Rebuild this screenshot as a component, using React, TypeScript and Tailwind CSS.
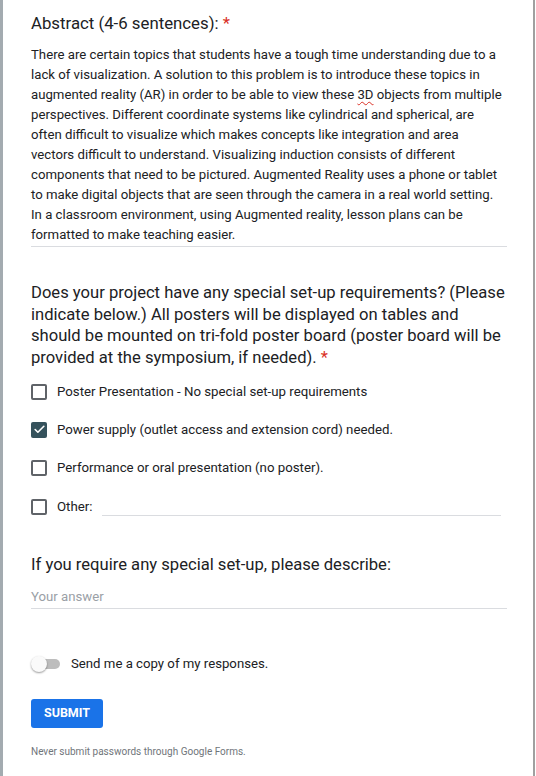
import React from 'react';
import { Check } from 'lucide-react';

const abstractLines = [
  'There are certain topics that students have a tough time understanding due to a',
  'lack of visualization. A solution to this problem is to introduce these topics in',
  '__3D__',
  'perspectives. Different coordinate systems like cylindrical and spherical, are',
  'often difficult to visualize which makes concepts like integration and area',
  'vectors difficult to understand. Visualizing induction consists of different',
  'components that need to be pictured. Augmented Reality uses a phone or tablet',
  'to make digital objects that are seen through the camera in a real world setting.',
  'In a classroom environment, using Augmented reality, lesson plans can be',
  'formatted to make teaching easier.',
];

const questionLines = [
  'Does your project have any special set-up requirements? (Please',
  'indicate below.) All posters will be displayed on tables and',
  'should be mounted on tri-fold poster board (poster board will be',
];

const options = [
  { label: 'Poster Presentation - No special set-up requirements', checked: false },
  { label: 'Power supply (outlet access and extension cord) needed.', checked: true },
  { label: 'Performance or oral presentation (no poster).', checked: false },
];

const CheckBox: React.FC<{ checked: boolean }> = ({ checked }) =>
  checked ? (
    <div className="w-4 h-4 rounded-[2px] bg-[#35525c] flex items-center justify-center flex-shrink-0">
      <Check size={13} strokeWidth={3} className="text-white" />
    </div>
  ) : (
    <div className="w-4 h-4 rounded-[2px] border-2 border-[#5f6368] flex-shrink-0" />
  );

export default function App() {
  return (
    <div className="w-[536px] h-[776px] bg-white border-l-[3px] border-l-[#a3abb0] flex overflow-hidden" style={{ fontFamily: 'Roboto, "Liberation Sans", sans-serif' }}>
      <div className="flex-1 border-r-2 border-r-[#a0a0a0] mr-[1px] pl-[28px] pr-[26px] text-[#202124]">
        {/* abstract */}
        <div className="pt-[11px] text-[16.8px] leading-[24px]">
          Abstract (4-6 sentences): <span className="text-[#d93025]">*</span>
        </div>
        <div className="mt-[10px] pb-[1px] border-b border-[#dadce0] text-[13.2px] leading-[20px]">
          {abstractLines.map((line, i) =>
            line === '__3D__' ? (
              <div key={i} className="whitespace-nowrap">
                augmented reality (AR) in order to be able to view these{' '}
                <span className="underline decoration-wavy decoration-[#d93025] decoration-1 underline-offset-2">3D</span>{' '}
                objects from multiple
              </div>
            ) : (
              <div key={i} className="whitespace-nowrap">{line}</div>
            )
          )}
        </div>

        {/* set-up question */}
        <div className="mt-[35px] text-[16.6px] leading-[21.7px]">
          {questionLines.map((l) => (
            <div key={l} className="whitespace-nowrap">{l}</div>
          ))}
          <div className="whitespace-nowrap">
            provided at the symposium, if needed). <span className="text-[#d93025]">*</span>
          </div>
        </div>
        <div className="mt-[15px] flex flex-col gap-[22px] text-[13.25px] text-[#202124]">
          {options.map((o) => (
            <div key={o.label} className="flex items-center gap-[10px] h-4">
              <CheckBox checked={o.checked} />
              <span>{o.label}</span>
            </div>
          ))}
          <div className="flex items-center gap-[10px] h-4 mt-[1px]">
            <CheckBox checked={false} />
            <span>Other:</span>
            <div className="flex-1 self-end border-b border-[#dadce0] translate-y-[1px] mr-[6px]" />
          </div>
        </div>

        {/* describe */}
        <div className="mt-[39px] text-[16.6px] leading-[22px]">If you require any special set-up, please describe:</div>
        <div className="mt-[11px] pb-[1px] border-b border-[#dadce0] text-[13.2px] leading-[20px] text-[#9aa0a6]">Your answer</div>

        {/* copy toggle */}
        <div className="mt-[45px] flex items-center">
          <div className="relative w-[30px] h-[18px] flex items-center">
            <div className="absolute left-[6px] right-[1px] h-[10px] rounded-full bg-[#bdbdbd]" />
            <div className="absolute left-0 w-[16px] h-[16px] rounded-full bg-[#fafafa] shadow-[0_1px_2px_rgba(0,0,0,0.4)]" />
          </div>
          <span className="ml-[10px] text-[13.2px]">Send me a copy of my responses.</span>
        </div>

        <button className="mt-[25px] w-[72px] h-[29px] rounded-[3px] bg-[#1a73e8] text-white text-[12.5px] font-bold">SUBMIT</button>

        <div className="mt-[16px] text-[10px] leading-[15px] text-[#70757a]">Never submit passwords through Google Forms.</div>
      </div>
    </div>
  );
}
